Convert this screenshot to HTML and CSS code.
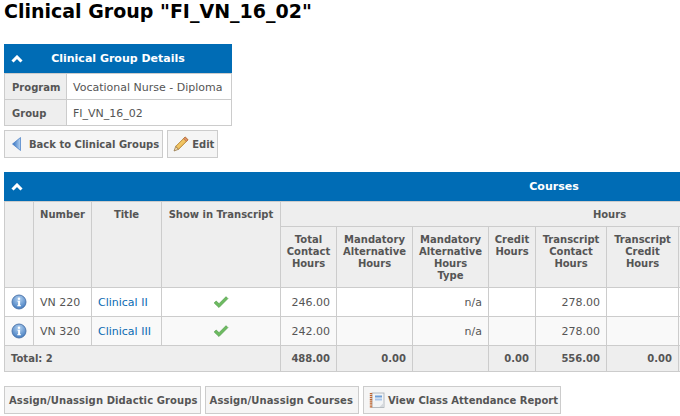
FILE: index.html
```html
<!DOCTYPE html>
<html lang="en">
<head>
    <meta charset="UTF-8">
    <meta name="viewport" content="width=device-width, initial-scale=1.0">
    <title>Clinical Group "FI_VN_16_02"</title>
    <link rel="stylesheet" href="styles.css">
</head>
<body>

    <h1>Clinical Group "FI_VN_16_02"</h1>

    <!-- details -->
    <div class="widget details">
        <div class="widget-head">
            <svg class="chevron" viewBox="0 0 12 8"><path d="M1.500 6.500 6 2l4.500 4.500" /></svg>
            <span class="widget-title">Clinical Group Details</span>
        </div>
        <table class="details-table">
            <tr><th>Program</th><td>Vocational Nurse - Diploma</td></tr>
            <tr><th>Group</th><td>FI_VN_16_02</td></tr>
        </table>
    </div>

    <div class="actions">
        <a class="btn" href="#">
            <svg class="icon" viewBox="0 0 16 16"><use href="#back"/></svg>
            Back to Clinical Groups
        </a>
        <a class="btn btn-icon" href="#">
            <svg class="icon" viewBox="0 0 16 16"><use href="#pencil"/></svg>
            Edit
        </a>
    </div>

    <!-- courses -->
    <div class="courses-clip">
        <div class="widget courses">
            <div class="widget-head">
                <svg class="chevron" viewBox="0 0 12 8"><path d="M1.500 6.500 6 2l4.500 4.500" /></svg>
                <span class="widget-title">Courses</span>
            </div>
            <table class="courses-table">
                <colgroup>
                    <col class="c-info"><col class="c-number"><col class="c-title"><col class="c-show">
                    <col class="c-total"><col class="c-alt"><col class="c-type"><col class="c-credit">
                    <col class="c-tcontact"><col class="c-tcredit"><col class="c-more"><col class="c-more"><col class="c-rest">
                </colgroup>
                <thead>
                    <tr>
                        <th rowspan="2"></th>
                        <th rowspan="2">Number</th>
                        <th rowspan="2">Title</th>
                        <th rowspan="2">Show in Transcript</th>
                        <th colspan="8">Hours</th>
                        <th rowspan="2"></th>
                    </tr>
                    <tr>
                        <th>Total<br>Contact<br>Hours</th>
                        <th>Mandatory<br>Alternative<br>Hours</th>
                        <th>Mandatory<br>Alternative<br>Hours<br>Type</th>
                        <th>Credit<br>Hours</th>
                        <th>Transcript<br>Contact<br>Hours</th>
                        <th>Transcript<br>Credit<br>Hours</th>
                        <th></th>
                        <th></th>
                    </tr>
                </thead>
                <tbody>
                    <tr>
                        <td class="icon-cell"><svg class="icon" viewBox="0 0 16 16"><use href="#info"/></svg></td>
                        <td>VN 220</td>
                        <td><a href="#">Clinical II</a></td>
                        <td class="center"><svg class="icon" viewBox="0 0 16 16"><use href="#tick"/></svg></td>
                        <td class="num">246.00</td>
                        <td></td>
                        <td class="num">n/a</td>
                        <td></td>
                        <td class="num">278.00</td>
                        <td></td><td></td><td></td><td></td>
                    </tr>
                    <tr class="alt">
                        <td class="icon-cell"><svg class="icon" viewBox="0 0 16 16"><use href="#info"/></svg></td>
                        <td>VN 320</td>
                        <td><a href="#">Clinical III</a></td>
                        <td class="center"><svg class="icon" viewBox="0 0 16 16"><use href="#tick"/></svg></td>
                        <td class="num">242.00</td>
                        <td></td>
                        <td class="num">n/a</td>
                        <td></td>
                        <td class="num">278.00</td>
                        <td></td><td></td><td></td><td></td>
                    </tr>
                </tbody>
                <tfoot>
                    <tr>
                        <th class="total-label" colspan="4">Total: 2</th>
                        <th class="num">488.00</th>
                        <th class="num">0.00</th>
                        <th></th>
                        <th class="num">0.00</th>
                        <th class="num">556.00</th>
                        <th class="num">0.00</th>
                        <th></th><th></th><th></th>
                    </tr>
                </tfoot>
            </table>
        </div>
    </div>

    <div class="actions bottom">
        <a class="btn btn-assign" href="#">Assign/Unassign Didactic Groups</a>
        <a class="btn btn-assign btn-wide" href="#">Assign/Unassign Courses</a>
        <a class="btn btn-icon btn-report" href="#">
            <svg class="icon" viewBox="0 0 16 16"><use href="#notebook"/></svg>
            View Class Attendance Report
        </a>
    </div>

    <svg class="defs" width="0" height="0">
        <defs>
            <radialGradient id="infoFill" cx=".5" cy=".3" r=".75"><stop offset="0" stop-color="#b4d3f2"/><stop offset="1" stop-color="#3a74ba"/></radialGradient>
            <linearGradient id="backFill" x1="0" x2="1" y1="0" y2="0"><stop offset="0" stop-color="#2f6fc0"/><stop offset="1" stop-color="#b5d2f0"/></linearGradient>
            <linearGradient id="pencilFill" x1="0" x2="1" y1="0" y2="1"><stop offset="0" stop-color="#fbe08a"/><stop offset="1" stop-color="#e7a83a"/></linearGradient>
            <g id="back">
                <path d="M11.500 1.500v13L3.500 8z" fill="url(#backFill)" stroke="#3f79c4" stroke-width=".7"/>
            </g>
            <g id="pencil">
                <path d="M12.200 1 15 3.800 5.500 13.300 2.700 10.500z" fill="url(#pencilFill)" stroke="#b07c24" stroke-width=".9"/>
                <path d="M12.200 1 15 3.800 13.300 5.500 10.500 2.700z" fill="#e2906a" stroke="#a86a3a" stroke-width=".6"/>
                <path d="M2.700 10.500 5.500 13.300 1 15z" fill="#f3dcb0" stroke="#8a6a3a" stroke-width=".7"/>
            </g>
            <g id="notebook">
                <rect x="3" y="1" width="12" height="14.500" fill="#f2f4f6" stroke="#a6adb4" stroke-width=".8"/>
                <path d="M2 1v14.500" stroke="#c0622a" stroke-width="2.400" stroke-dasharray="1.200 .7"/>
                <rect x="6" y="3.500" width="7" height="2" fill="#6f9fd8"/>
                <rect x="6" y="6.500" width="7" height="2" fill="#a9c6ea"/>
                <path d="M10.500 15l4.500-4.500v4.500z" fill="#d5d9dd"/>
            </g>
            <g id="info">
                <circle cx="8" cy="8" r="7" fill="url(#infoFill)" stroke="#4a72a8" stroke-width=".9"/>
                <circle cx="8" cy="4.700" r="1.200" fill="#fff"/>
                <path d="M6.500 6.800h2.600v4.400h.9v1H6.200v-1h.9V7.800h-.6z" fill="#fff"/>
            </g>
            <g id="tick">
                <path d="M1.200 9 3.200 7 6 9.700 13 2.700 14.900 4.600 6 13.500z" fill="#6dbb60" stroke="#4f9a48" stroke-width=".7"/>
            </g>
        </defs>
    </svg>

</body>
</html>
```
FILE: styles.css
```css
html, body {
    overflow: hidden;
}

body {
    font-family: "DejaVu Sans", Verdana, sans-serif;
    font-size: 11px;
    color: #555555;
    background-color: #ffffff;
    margin: 0;
    padding: 0 0 0 4px;
}

h1 {
    font-size: 19px;
    line-height: 23px;
    color: #000000;
    margin: 0 0 21px;
}

a {
    color: #0b6bb3;
    text-decoration: none;
}

.defs {
    position: absolute;
}

.widget-head {
    display: flex;
    align-items: center;
    height: 29px;
    background-color: #006cb5;
    color: #ffffff;
    font-weight: bold;
}

.chevron {
    width: 12px;
    height: 8px;
    margin-left: 7px;
    flex: none;
    fill: none;
    stroke: #ffffff;
    stroke-width: 3;
}

.widget-title {
    flex: 1;
    text-align: center;
    padding-right: 19px;
}

.details {
    width: 228px;
}

table {
    border-collapse: collapse;
    background-color: #ffffff;
}

th, td {
    border: 1px solid #cccccc;
}

th {
    background-color: #eeeeee;
    font-size: 10px;
}

.details-table {
    width: 228px;
    table-layout: fixed;
}

.details-table th {
    width: 62px;
    height: 26px;
    padding: 1px 7px 0;
    box-sizing: border-box;
    text-align: left;
}

.details-table td {
    padding: 1px 6px 0;
    white-space: nowrap;
}

.actions {
    display: flex;
    gap: 4px;
    margin-top: 4px;
}

.btn {
    display: flex;
    align-items: center;
    gap: 4px;
    height: 28px;
    box-sizing: border-box;
    padding: 0 3px 0 4px;
    border: 1px solid #cccccc;
    background-color: #f5f5f5;
    color: #555555;
    font-size: 10px;
    font-weight: bold;
    white-space: nowrap;
}

.btn-icon {
    padding-left: 5px;
    gap: 3px;
}

.btn-assign {
    letter-spacing: .1px;
    padding-right: 2px;
}

.btn-wide {
    padding: 0 5px 0 4px;
}

.btn-report {
    padding-right: 2px;
}

.icon {
    width: 16px;
    height: 16px;
    flex: none;
    display: block;
}

.courses-clip {
    margin-top: 14px;
    overflow: hidden;
}

.courses {
    width: 1100px;
}

.courses-table {
    width: 1100px;
    table-layout: fixed;
}

.courses-table th {
    padding: 7px 1px 5px;
    line-height: 12px;
    vertical-align: top;
}

.courses-table td {
    height: 29px;
    padding: 0 6px;
    box-sizing: border-box;
}

.courses-table tbody tr.alt td {
    background-color: #f9f9f9;
}

.courses-table tfoot th {
    height: 26px;
    padding: 1px 6px 0;
    box-sizing: border-box;
    vertical-align: middle;
    text-align: right;
}

.courses-table tfoot th.total-label {
    text-align: left;
}

.num {
    text-align: right;
}

.center .icon {
    margin: 0 auto;
}

.c-info { width: 29px; }
.c-number { width: 58px; }
.c-title { width: 70px; }
.c-show { width: 119px; }
.c-total { width: 56px; }
.c-alt { width: 76px; }
.c-type { width: 76px; }
.c-credit { width: 47px; }
.c-tcontact { width: 71px; }
.c-tcredit { width: 72px; }
.c-more { width: 130px; }
.c-rest { width: 166px; }

.bottom {
    margin-top: 14px;
}
```
